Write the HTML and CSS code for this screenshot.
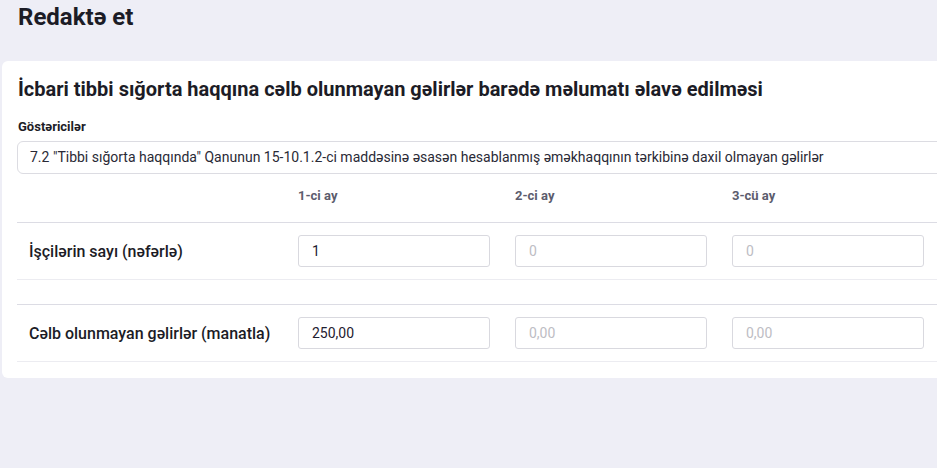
FILE: index.html
```html
<!DOCTYPE html>
<html lang="az">
<head>
<meta charset="utf-8">
<title>Redaktə et</title>
<link rel="stylesheet" href="styles.css">
</head>
<body>
<div class="page">
  <h1 class="page-title">Redaktə et</h1>
  <section class="card">
    <h2 class="card-title">İcbari tibbi sığorta haqqına cəlb olunmayan gəlirlər barədə məlumatı əlavə edilməsi</h2>
    <label class="field-label">Göstəricilər</label>
    <div class="select">7.2 "Tibbi sığorta haqqında" Qanunun 15-10.1.2-ci maddəsinə əsasən hesablanmış əməkhaqqının tərkibinə daxil olmayan gəlirlər</div>

    <div class="grid head">
      <div class="cell"></div>
      <div class="cell col">1-ci ay</div>
      <div class="cell col">2-ci ay</div>
      <div class="cell col">3-cü ay</div>
    </div>

    <div class="grid row">
      <div class="cell label">İşçilərin sayı (nəfərlə)</div>
      <div class="cell col"><div class="input">1</div></div>
      <div class="cell col"><div class="input empty">0</div></div>
      <div class="cell col"><div class="input empty">0</div></div>
    </div>

    <div class="grid row second">
      <div class="cell label">Cəlb olunmayan gəlirlər (manatla)</div>
      <div class="cell col"><div class="input">250,00</div></div>
      <div class="cell col"><div class="input empty">0,00</div></div>
      <div class="cell col"><div class="input empty">0,00</div></div>
    </div>
  </section>
</div>
</body>
</html>
```
FILE: styles.css
```css
html, body {
  margin: 0;
  padding: 0;
  overflow: hidden;
  background: #eeeef6;
}
body {
  font-family: Roboto, "Noto Sans", "Liberation Sans", sans-serif;
  color: #1f2030;
  width: 937px;
  height: 468px;
}
.page {
  padding-left: 2px;
  width: 1000px;
}
.page-title {
  margin: 0 0 0 16px;
  padding-top: 1px;
  font-size: 24px;
  line-height: 32px;
  font-weight: 700;
  color: #1c1c26;
}
.card {
  margin-top: 28px;
  background: #fff;
  border-radius: 6px;
  padding: 16px 15px 16px 15px;
  width: 930px;
}
.card-title {
  margin: 0;
  padding-left: 1px;
  font-size: 20px;
  line-height: 24px;
  font-weight: 700;
  color: #1c1c26;
}
.field-label {
  display: block;
  margin-top: 18px;
  padding-left: 1px;
  font-size: 13px;
  line-height: 16px;
  font-weight: 700;
  color: #1c1c26;
}
.select {
  margin-top: 6px;
  height: 33px;
  box-sizing: border-box;
  border: 1px solid #dcdce2;
  border-radius: 6px;
  padding: 0 12px;
  font-size: 14px;
  line-height: 31px;
  color: #2a2a36;
  white-space: nowrap;
  overflow: hidden;
}
.grid {
  display: grid;
  grid-template-columns: 269px 217px 217px 217px 1fr;
  align-items: center;
}
.head {
  padding: 14px 0 18px;
}
.head .col {
  font-size: 13px;
  line-height: 16px;
  font-weight: 700;
  color: #5c5c6d;
}
.col {
  padding: 0 13px 0 12px;
}
.row {
  border-top: 1px solid #dcdce4;
  border-bottom: 1px solid #ececf1;
  padding: 12px 0;
}
.row.second {
  margin-top: 24px;
}
.label {
  padding-left: 12px;
  font-size: 16px;
  font-weight: 500;
  color: #1c1c26;
}
.input {
  height: 32px;
  box-sizing: border-box;
  border: 1px solid #d9d9df;
  border-radius: 3px;
  padding: 0 13px;
  font-size: 14px;
  line-height: 30px;
  color: #1f2030;
}
.input.empty {
  color: #bdbdc4;
}
```
